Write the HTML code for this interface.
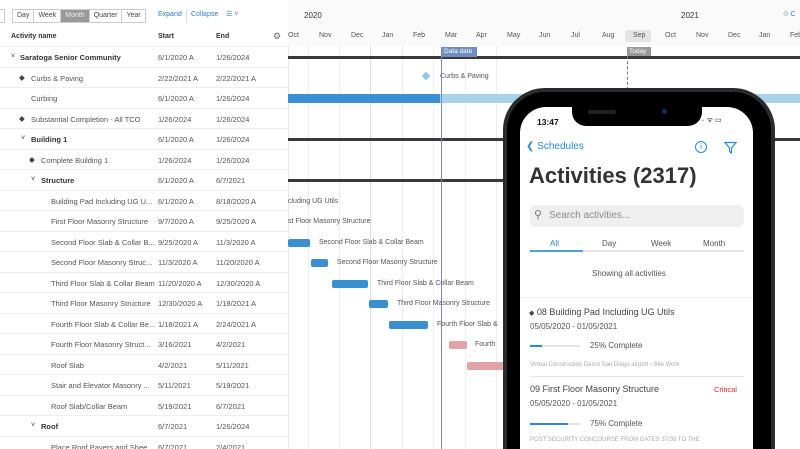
<!DOCTYPE html><html><head><style>
*{margin:0;padding:0;box-sizing:border-box}
html,body{width:800px;height:449px;overflow:hidden}
body{background:#fff;font-family:"Liberation Sans",sans-serif;color:#333}
#w{position:relative;width:800px;height:449px;overflow:hidden}
.a{position:absolute;white-space:nowrap}
.t{font-size:7.5px;color:#555}
.row{position:absolute;left:0;width:288px;height:20.5px;border-bottom:1px solid #eee}
.vl{position:absolute;top:46px;bottom:0;width:1px;background:#eee}
.bar{position:absolute;height:8px;border-radius:2px;background:#3a8fd0}
.gl{position:absolute;font-size:7px;color:#555;white-space:nowrap}
</style></head><body><div id="w">
<div class="a" style="left:0;top:9px;width:5px;height:14px;border:1px solid #ccc;border-left:none"></div>
<div class="a" style="left:12px;top:9px;height:14px;border:1px solid #ccc;display:flex;font-size:7px;color:#444">
<span style="padding:2px 4px;border-right:1px solid #ccc">Day</span><span style="padding:2px 4px;border-right:1px solid #ccc">Week</span><span style="padding:2px 4px;background:#999;color:#eee">Month</span><span style="padding:2px 4px;border-left:1px solid #ccc;border-right:1px solid #ccc">Quarter</span><span style="padding:2px 4px">Year</span></div>
<div class="a" style="left:158px;top:11px;font-size:7px;color:#3a7bbf">Expand</div>
<div class="a" style="left:186px;top:9px;width:1px;height:14px;background:#ddd"></div>
<div class="a" style="left:191px;top:11px;font-size:7px;color:#3a7bbf">Collapse</div>
<div class="a" style="left:226px;top:10px;font-size:7px;color:#3a7bbf">☰ ˅</div>
<div class="a" style="left:11px;top:33px;font-size:7px;font-weight:bold;color:#333">Activity name</div>
<div class="a" style="left:158px;top:33px;font-size:7px;font-weight:bold;color:#333">Start</div>
<div class="a" style="left:216px;top:33px;font-size:7px;font-weight:bold;color:#333">End</div>
<div class="a" style="left:273px;top:31px;font-size:9px;color:#666">⚙</div>
<div class="a" style="left:0;top:46px;width:288px;height:1px;background:#eee"></div>
<div class="a" style="left:288px;top:0;width:512px;height:46px;background:#fafafa"></div>
<div class="a" style="left:304px;top:11px;font-size:8px;color:#333">2020</div>
<div class="a" style="left:681px;top:11px;font-size:8px;color:#333">2021</div>
<div class="a" style="left:783px;top:11px;font-size:7px;color:#3a7bbf">⟐ C</div>
<div class="a" style="left:625px;top:30px;width:26px;height:12px;background:#e4e4e4;border-radius:2px"></div>
<div class="a" style="left:285px;top:32px;width:520px;height:10px;font-size:7px;color:#555">
<span class="a" style="left:3px">Oct</span><span class="a" style="left:34px">Nov</span><span class="a" style="left:66px">Dec</span><span class="a" style="left:97px">Jan</span><span class="a" style="left:128px">Feb</span><span class="a" style="left:160px">Mar</span><span class="a" style="left:191px">Apr</span><span class="a" style="left:222px">May</span><span class="a" style="left:254px">Jun</span><span class="a" style="left:286px">Jul</span><span class="a" style="left:317px">Aug</span><span class="a" style="left:348px">Sep</span><span class="a" style="left:380px">Oct</span><span class="a" style="left:411px">Nov</span><span class="a" style="left:443px">Dec</span><span class="a" style="left:474px">Jan</span><span class="a" style="left:505px">Feb</span></div>
<div class="vl" style="left:308px"></div><div class="vl" style="left:339px"></div><div class="vl" style="left:370px;background:#ddd"></div><div class="vl" style="left:402px"></div><div class="vl" style="left:433px"></div><div class="vl" style="left:465px"></div><div class="vl" style="left:496px"></div>
<div class="vl" style="left:288px;background:#e6e6e6"></div>
<div class="row" style="top:47px"><span class="a" style="left:11px;top:6px;font-size:7px">˅</span><span class="a t" style="left:20px;top:6px;font-weight:bold;color:#333">Saratoga Senior Community</span><span class="a t" style="left:158px;top:6px">6/1/2020 A</span><span class="a t" style="left:216px;top:6px">1/26/2024</span></div>
<div class="row" style="top:67.5px"><span class="a t" style="left:19px;top:5px;color:#444">◆</span><span class="a t" style="left:31px;top:6px">Curbs &amp; Paving</span><span class="a t" style="left:158px;top:6px">2/22/2021 A</span><span class="a t" style="left:216px;top:6px">2/22/2021 A</span></div>
<div class="row" style="top:88px"><span class="a t" style="left:31px;top:6px">Curbing</span><span class="a t" style="left:158px;top:6px">6/1/2020 A</span><span class="a t" style="left:216px;top:6px">1/26/2024</span></div>
<div class="row" style="top:108.5px"><span class="a t" style="left:19px;top:5px;color:#444">◆</span><span class="a t" style="left:31px;top:6px">Substantial Completion - All TCO</span><span class="a t" style="left:158px;top:6px">1/26/2024</span><span class="a t" style="left:216px;top:6px">1/26/2024</span></div>
<div class="row" style="top:129px"><span class="a" style="left:21px;top:6px;font-size:7px">˅</span><span class="a t" style="left:31px;top:6px;font-weight:bold;color:#333">Building 1</span><span class="a t" style="left:158px;top:6px">6/1/2020 A</span><span class="a t" style="left:216px;top:6px">1/26/2024</span></div>
<div class="row" style="top:149.5px"><span class="a t" style="left:29px;top:5px;color:#444">◆</span><span class="a t" style="left:41px;top:6px">Complete Building 1</span><span class="a t" style="left:158px;top:6px">1/26/2024</span><span class="a t" style="left:216px;top:6px">1/26/2024</span></div>
<div class="row" style="top:170px"><span class="a" style="left:31px;top:6px;font-size:7px">˅</span><span class="a t" style="left:41px;top:6px;font-weight:bold;color:#333">Structure</span><span class="a t" style="left:158px;top:6px">6/1/2020 A</span><span class="a t" style="left:216px;top:6px">6/7/2021</span></div>
<div class="row" style="top:190.5px"><span class="a t" style="left:51px;top:6px">Building Pad Including UG U...</span><span class="a t" style="left:158px;top:6px">6/1/2020 A</span><span class="a t" style="left:216px;top:6px">8/18/2020 A</span></div>
<div class="row" style="top:211px"><span class="a t" style="left:51px;top:6px">First Floor Masonry Structure</span><span class="a t" style="left:158px;top:6px">9/7/2020 A</span><span class="a t" style="left:216px;top:6px">9/25/2020 A</span></div>
<div class="row" style="top:231.5px"><span class="a t" style="left:51px;top:6px">Second Floor Slab &amp; Collar B...</span><span class="a t" style="left:158px;top:6px">9/25/2020 A</span><span class="a t" style="left:216px;top:6px">11/3/2020 A</span></div>
<div class="row" style="top:252px"><span class="a t" style="left:51px;top:6px">Second Floor Masonry Struc...</span><span class="a t" style="left:158px;top:6px">11/3/2020 A</span><span class="a t" style="left:216px;top:6px">11/20/2020 A</span></div>
<div class="row" style="top:272.5px"><span class="a t" style="left:51px;top:6px">Third Floor Slab &amp; Collar Beam</span><span class="a t" style="left:158px;top:6px">11/20/2020 A</span><span class="a t" style="left:216px;top:6px">12/30/2020 A</span></div>
<div class="row" style="top:293px"><span class="a t" style="left:51px;top:6px">Third Floor Masonry Structure</span><span class="a t" style="left:158px;top:6px">12/30/2020 A</span><span class="a t" style="left:216px;top:6px">1/18/2021 A</span></div>
<div class="row" style="top:313.5px"><span class="a t" style="left:51px;top:6px">Fourth Floor Slab &amp; Collar Be...</span><span class="a t" style="left:158px;top:6px">1/18/2021 A</span><span class="a t" style="left:216px;top:6px">2/24/2021 A</span></div>
<div class="row" style="top:334px"><span class="a t" style="left:51px;top:6px">Fourth Floor Masonry Struct...</span><span class="a t" style="left:158px;top:6px">3/16/2021</span><span class="a t" style="left:216px;top:6px">4/2/2021</span></div>
<div class="row" style="top:354.5px"><span class="a t" style="left:51px;top:6px">Roof Slab</span><span class="a t" style="left:158px;top:6px">4/2/2021</span><span class="a t" style="left:216px;top:6px">5/11/2021</span></div>
<div class="row" style="top:375px"><span class="a t" style="left:51px;top:6px">Stair and Elevator Masonry ...</span><span class="a t" style="left:158px;top:6px">5/11/2021</span><span class="a t" style="left:216px;top:6px">5/19/2021</span></div>
<div class="row" style="top:395.5px"><span class="a t" style="left:51px;top:6px">Roof Slab/Collar Beam</span><span class="a t" style="left:158px;top:6px">5/19/2021</span><span class="a t" style="left:216px;top:6px">6/7/2021</span></div>
<div class="row" style="top:416px"><span class="a" style="left:31px;top:6px;font-size:7px">˅</span><span class="a t" style="left:41px;top:6px;font-weight:bold;color:#333">Roof</span><span class="a t" style="left:158px;top:6px">6/7/2021</span><span class="a t" style="left:216px;top:6px">1/26/2024</span></div>
<div class="row" style="top:436.5px"><span class="a t" style="left:51px;top:6px">Place Roof Pavers and Shee...</span><span class="a t" style="left:158px;top:6px">6/7/2021</span><span class="a t" style="left:216px;top:6px">2/4/2021</span></div>
<div class="a" style="left:288px;top:56px;width:512px;height:3px;background:#3a3a3a"></div>
<div class="a" style="left:288px;top:138px;width:512px;height:3px;background:#3a3a3a"></div>
<div class="a" style="left:288px;top:179px;width:230px;height:3px;background:#3a3a3a"></div>
<div class="a" style="left:442px;top:47px;width:35px;height:10px;background:#6f8fc0;color:#fff;font-size:6.5px;padding:1px 2px">Data date</div>
<div class="a" style="left:627px;top:47px;width:24px;height:9px;background:#999;color:#fff;font-size:6.5px;padding:1px 2px">Today</div>
<div class="a" style="left:627px;top:56px;height:34px;border-left:1px dashed #777"></div>
<div class="a" style="left:423px;top:73px;width:6px;height:6px;background:#8cc9ea;transform:rotate(45deg)"></div>
<div class="gl" style="left:440px;top:73px">Curbs &amp; Paving</div>
<div class="a" style="left:288px;top:94px;width:152px;height:9px;background:#3a8fd0"></div>
<div class="a" style="left:440px;top:94px;width:360px;height:9px;background:#a6d2ea"></div>
<div class="a" style="left:441px;top:47px;width:1px;height:402px;background:#6f8fc0"></div>
<div class="gl" style="left:288px;top:198px">cluding UG Utils</div>
<div class="gl" style="left:288px;top:218px">st Floor Masonry Structure</div>
<div class="bar" style="left:288px;top:239px;width:22px"></div><div class="gl" style="left:319px;top:239px">Second Floor Slab &amp; Collar Beam</div>
<div class="bar" style="left:311px;top:259px;width:17px"></div><div class="gl" style="left:337px;top:259px">Second Floor Masonry Structure</div>
<div class="bar" style="left:332px;top:280px;width:36px"></div><div class="gl" style="left:377px;top:280px">Third Floor Slab &amp; Collar Beam</div>
<div class="bar" style="left:369px;top:300px;width:19px"></div><div class="gl" style="left:397px;top:300px">Third Floor Masonry Structure</div>
<div class="bar" style="left:389px;top:321px;width:39px"></div><div class="gl" style="left:437px;top:321px">Fourth Floor Slab &amp;</div>
<div class="bar" style="left:449px;top:341px;width:18px;background:#e0a3a6"></div><div class="gl" style="left:475px;top:341px">Fourth</div>
<div class="bar" style="left:467px;top:362px;width:40px;background:#e0a3a6"></div>
<div class="a" style="left:503px;top:88px;width:272px;height:420px;background:#2b2b2d;border-radius:42px"></div>
<div class="a" style="left:507px;top:92px;width:264px;height:420px;background:#000;border-radius:38px"></div>
<div class="a" style="left:520px;top:107px;width:233px;height:360px;background:#fff;border-radius:26px 26px 0 0;overflow:hidden">
<div class="a" style="left:52px;top:-1px;width:130px;height:20px;background:#000;border-radius:0 0 14px 14px"></div>
<div class="a" style="left:68px;top:3px;width:28px;height:4px;background:#222;border-radius:2px"></div>
<div class="a" style="left:142px;top:2px;width:5px;height:5px;background:#1a2a5a;border-radius:50%"></div>
<div class="a" style="left:17px;top:10px;font-size:8.5px;font-weight:bold;color:#111">13:47</div>
<div class="a" style="left:180px;top:9px;font-size:7px;color:#111">·· ᯤ ▭</div>
<div class="a" style="left:6px;top:34px;font-size:10px;color:#2a8bd0">❮ Schedules</div>
<div class="a" style="left:175px;top:34px;width:12px;height:12px;border:1.2px solid #2a8bd0;border-radius:50%;font-size:8px;color:#2a8bd0;text-align:center;line-height:10px">i</div>
<svg class="a" style="left:204px;top:34px" width="13" height="13" viewBox="0 0 13 13"><path d="M1 1.5H12L7.5 7V12L5.5 10.5V7Z" fill="none" stroke="#2a8bd0" stroke-width="1.2"/></svg>
<div class="a" style="left:9px;top:56px;font-size:22px;font-weight:bold;color:#333">Activities (2317)</div>
<div class="a" style="left:10px;top:98px;width:214px;height:22px;background:#efefef;border-radius:6px"></div>
<div class="a" style="left:14px;top:101px;font-size:11px;color:#777">⚲</div>
<div class="a" style="left:29px;top:103px;font-size:10px;color:#888">Search activities...</div>
<div class="a" style="left:10px;top:143px;width:214px;height:2px;background:#e5e5e5"></div>
<div class="a" style="left:10px;top:143px;width:53px;height:2px;background:#4aa3db"></div>
<div class="a" style="left:30px;top:132px;font-size:8px;color:#2a8bd0">All</div>
<div class="a" style="left:82px;top:132px;font-size:8px;color:#555">Day</div>
<div class="a" style="left:131px;top:132px;font-size:8px;color:#555">Week</div>
<div class="a" style="left:183px;top:132px;font-size:8px;color:#555">Month</div>
<div class="a" style="left:72px;top:162px;font-size:8px;color:#555">Showing all activities</div>
<div class="a" style="left:0;top:190px;width:233px;height:1px;background:#eee"></div>
<div class="a" style="left:9px;top:200px;font-size:9px;color:#444"><span style="font-size:7px">◆</span> 08 Building Pad Including UG Utils</div>
<div class="a" style="left:10px;top:215px;font-size:8px;color:#555">05/05/2020 - 01/05/2021</div>
<div class="a" style="left:10px;top:238px;width:50px;height:2px;background:#e5e5e5"><div style="width:12px;height:2px;background:#2a8bd0"></div></div>
<div class="a" style="left:70px;top:234px;font-size:8px;color:#555">25% Complete</div>
<div class="a" style="left:10px;top:255px;font-size:6px;color:#aaa">Virtual Construction Demo San Diego airport › Site Work</div>
<div class="a" style="left:10px;top:269px;width:214px;height:1px;background:#e5e5e5"></div>
<div class="a" style="left:10px;top:277px;font-size:9px;color:#444">09 First Floor Masonry Structure</div>
<div class="a" style="left:194px;top:278px;font-size:7.5px;color:#d03030">Critical</div>
<div class="a" style="left:10px;top:292px;font-size:8px;color:#555">05/05/2020 - 01/05/2021</div>
<div class="a" style="left:10px;top:316px;width:50px;height:2px;background:#e5e5e5"><div style="width:38px;height:2px;background:#2a8bd0"></div></div>
<div class="a" style="left:70px;top:312px;font-size:8px;color:#555">75% Complete</div>
<div class="a" style="left:10px;top:330px;font-size:6px;color:#aaa">POST SECURITY CONCOURSE FROM GATES 37/38 TO THE</div>
</div>
</div></body></html>
